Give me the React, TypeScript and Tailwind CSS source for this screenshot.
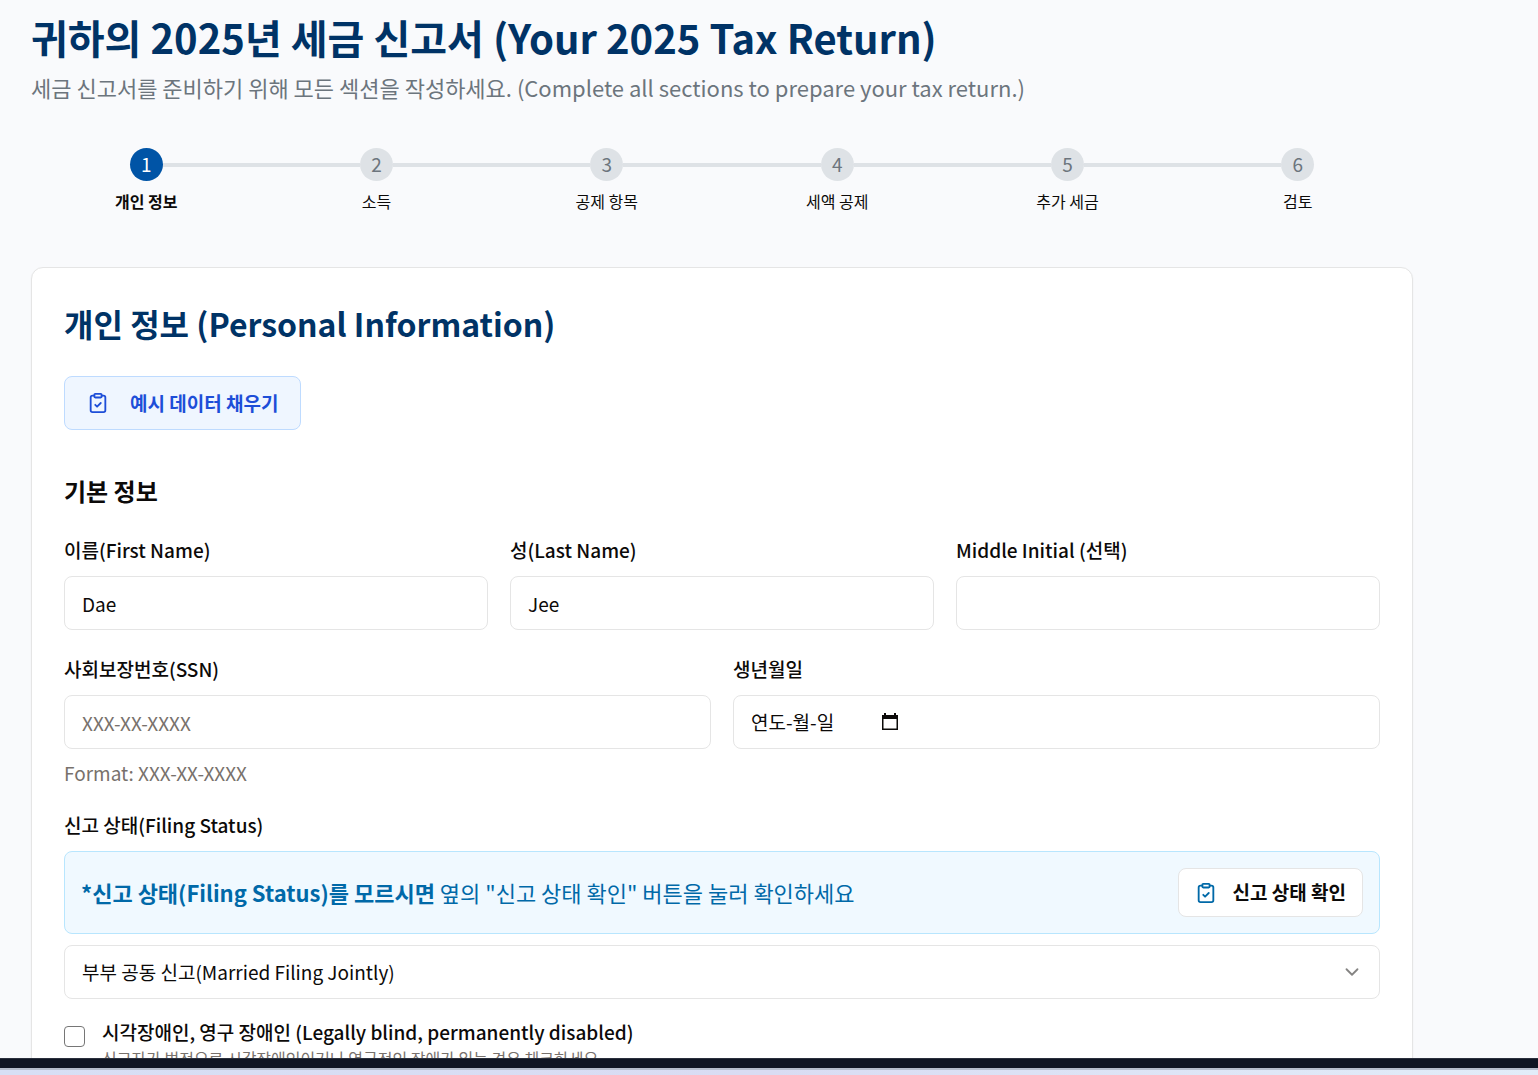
import type { InputHTMLAttributes } from "react";

const steps = ["개인 정보", "소득", "공제 항목", "세액 공제", "추가 세금", "검토"];

function ClipboardIcon({ className }: { className: string }) {
  return (
    <svg
      viewBox="0 0 24 24"
      fill="none"
      stroke="currentColor"
      strokeWidth="2"
      strokeLinecap="round"
      strokeLinejoin="round"
      className={className}
      aria-hidden="true"
    >
      <rect width="8" height="4" x="8" y="2" rx="1" ry="1" />
      <path d="M16 4h2a2 2 0 0 1 2 2v14a2 2 0 0 1-2 2H6a2 2 0 0 1-2-2V6a2 2 0 0 1 2-2h2" />
      <path d="m9 14 2 2 4-4" />
    </svg>
  );
}

function Stepper() {
  return (
    <ol className="mt-[45px] grid grid-cols-6">
      {steps.map((label, i) => (
        <li key={label} className="flex flex-col items-center">
          <div className="flex w-full items-center">
            <span className={i === 0 ? "h-1 flex-1" : "h-1 flex-1 bg-[#dee2e6]"} />
            <span
              className={
                i === 0
                  ? "flex size-[33px] items-center justify-center rounded-full bg-[#0054a6] text-[19px] text-white"
                  : "flex size-[33px] items-center justify-center rounded-full bg-[#dee2e6] text-[19px] text-[#6c757d]"
              }
            >
              {i + 1}
            </span>
            <span className={i === steps.length - 1 ? "h-1 flex-1" : "h-1 flex-1 bg-[#dee2e6]"} />
          </div>
          <span
            className={
              i === 0
                ? "mt-[9px] text-base leading-[22px] font-bold"
                : "mt-[9px] text-base leading-[22px]"
            }
          >
            {label}
          </span>
        </li>
      ))}
    </ol>
  );
}

function Field({
  id,
  label,
  hint,
  ...input
}: { id: string; label: string; hint?: string } & InputHTMLAttributes<HTMLInputElement>) {
  return (
    <div className="flex flex-col">
      <label htmlFor={id} className="text-[19px] leading-7 font-medium">
        {label}
      </label>
      <input
        id={id}
        type="text"
        className="mt-3 h-[54px] w-full rounded-lg border border-[#e5e5e5] bg-white px-[17px] text-[19px] placeholder:text-[#78716c]"
        {...input}
      />
      {hint && <p className="mt-2.5 text-[19px] leading-7 text-[#78716c]">{hint}</p>}
    </div>
  );
}

function BirthDateField() {
  return (
    <div className="flex flex-col">
      <label htmlFor="birth" className="text-[19px] leading-7 font-medium">
        생년월일
      </label>
      <div className="mt-3 flex h-[54px] items-center rounded-lg border border-[#e5e5e5] bg-white px-[17px]">
        <input id="birth" type="text" defaultValue="연도-월-일" className="w-[131px] text-[19px]" />
        <button type="button" aria-label="날짜 선택">
          <svg viewBox="0 0 16 18" className="h-[18px] w-4" fill="currentColor" aria-hidden="true">
            <path d="M2 0h2v2h8V0h2v2h2v15H0V2h2V0ZM1.5 6v9.5h13V6h-13Z" />
          </svg>
        </button>
      </div>
    </div>
  );
}

export default function App() {
  return (
    <div className="flex h-screen flex-col overflow-hidden bg-[#f9fafc] font-['Noto_Sans_CJK_KR',sans-serif] text-[#0c0a09]">
      <main className="min-h-0 flex-1 overflow-hidden pr-[125px] pl-[31px]">
        <h1 className="mt-2.5 text-[40px] leading-[54px] font-bold text-[#003366]">
          귀하의 2025년 세금 신고서 (Your 2025 Tax Return)
        </h1>
        <p className="mt-[7px] text-[22px] leading-8 text-[#6c757d]">
          세금 신고서를 준비하기 위해 모든 섹션을 작성하세요. (Complete all sections to prepare your tax return.)
        </p>
        <Stepper />

        <form className="mt-[55px] rounded-xl border border-[#e5e5e5] bg-white px-8 pt-8 pb-16 shadow-xs">
          <h2 className="text-[32px] leading-[46px] font-bold text-[#003366]">개인 정보 (Personal Information)</h2>
          <button
            type="button"
            className="mt-[30px] flex h-[54px] items-center rounded-lg border border-[#bedbff] bg-[#eff6ff] px-[22px] text-[19px] font-bold text-[#1d4ed8]"
          >
            <ClipboardIcon className="mr-[21px] size-[22px]" />
            예시 데이터 채우기
          </button>

          <h3 className="mt-[43px] text-2xl leading-9 font-bold">기본 정보</h3>
          <div className="mt-[27px] grid grid-cols-3 gap-[22px]">
            <Field id="first" label="이름(First Name)" defaultValue="Dae" />
            <Field id="last" label="성(Last Name)" defaultValue="Jee" />
            <Field id="middle" label="Middle Initial (선택)" />
          </div>
          <div className="mt-[25px] grid grid-cols-2 gap-[22px]">
            <Field id="ssn" label="사회보장번호(SSN)" placeholder="XXX-XX-XXXX" hint="Format: XXX-XX-XXXX" />
            <BirthDateField />
          </div>

          <label htmlFor="status" className="mt-6 block text-[19px] leading-7 font-medium">
            신고 상태(Filing Status)
          </label>
          <div className="mt-3 flex items-center justify-between rounded-lg border border-[#b8e6fe] bg-[#f0f9ff] p-4 text-[22px] text-[#0069a8]">
            <p>
              <strong className="font-bold">*신고 상태(Filing Status)를 모르시면</strong> 옆의 "신고 상태 확인" 버튼을
              눌러 확인하세요
            </p>
            <button
              type="button"
              className="flex h-[49px] items-center rounded-lg border border-[#e5e5e5] bg-white px-4 text-[19px] font-bold text-[#0c0a09]"
            >
              <ClipboardIcon className="mr-[15px] size-[22px] text-[#0069a8]" />
              신고 상태 확인
            </button>
          </div>
          <div className="relative mt-[11px]">
            <select
              id="status"
              className="h-[54px] w-full appearance-none rounded-lg border border-[#e5e5e5] bg-white px-[17px] text-[19px]"
            >
              <option>부부 공동 신고(Married Filing Jointly)</option>
            </select>
            <svg
              viewBox="0 0 24 24"
              className="pointer-events-none absolute top-4 right-[17px] size-[22px] text-[#858483]"
              fill="none"
              stroke="currentColor"
              strokeWidth="2"
              strokeLinecap="round"
              strokeLinejoin="round"
              aria-hidden="true"
            >
              <path d="m6 9 6 6 6-6" />
            </svg>
          </div>

          <div className="mt-[19px] flex items-start">
            <input
              id="disabled"
              type="checkbox"
              className="mt-2 size-[21px] shrink-0 appearance-none rounded-sm border border-[#767676] bg-white checked:bg-[#0054a6]"
            />
            <div className="ml-[17px]">
              <label htmlFor="disabled" className="block text-[19px] leading-7 font-medium">
                시각장애인, 영구 장애인 (Legally blind, permanently disabled)
              </label>
              <p className="text-base leading-6 text-[#78716c]">
                신고자가 법적으로 시각장애인이거나 영구적인 장애가 있는 경우 체크하세요
              </p>
            </div>
          </div>
        </form>
      </main>
      <footer className="shrink-0">
        <div className="h-2.5 border-t border-[#2b303d] bg-[#0f1523]" />
        <div className="h-[7px] border-t-2 border-[#b4bccb] bg-linear-to-r from-[#d7dff5] via-[#d9dcf3] to-[#e2edf9]" />
      </footer>
    </div>
  );
}
